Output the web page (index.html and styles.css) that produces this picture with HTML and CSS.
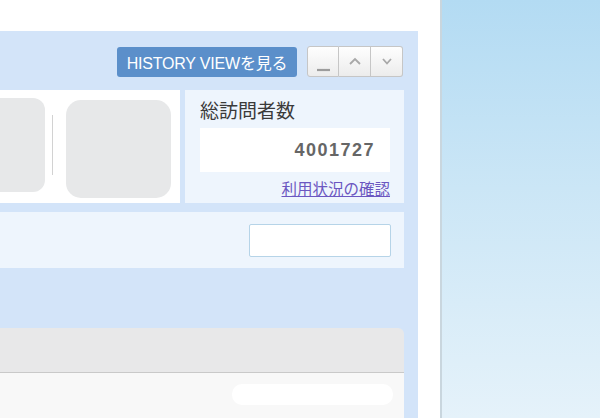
FILE: index.html
```html
<!DOCTYPE html>
<html lang="ja">
<head>
<meta charset="UTF-8" />
<meta name="viewport" content="width=device-width, initial-scale=1" />
<title>総訪問者数</title>
<link rel="stylesheet" href="styles.css">
</head>
<body>
  <div class="page">
    <div class="page-top"></div>
    <div class="panel">
      <div class="toolbar">
        <a class="history-btn" href="#">HISTORY VIEWを見る</a>
        <div class="btn-group">
          <button class="seg" aria-label="最小化">
            <svg viewBox="0 0 16 16" aria-hidden="true"><line x1="2" y1="13" x2="15" y2="13" class="bar"/></svg>
          </button>
          <button class="seg" aria-label="上へ">
            <svg viewBox="0 0 16 16" aria-hidden="true"><polyline points="3,10 8,5 13,10"/></svg>
          </button>
          <button class="seg" aria-label="下へ">
            <svg viewBox="0 0 16 16" aria-hidden="true"><polyline points="4,5 8,9.5 12,5"/></svg>
          </button>
        </div>
      </div>

      <div class="row-top">
        <div class="gallery">
          <div class="tile tile-a"></div>
          <div class="tile-edge"></div>
          <div class="tile tile-b"></div>
        </div>
        <div class="stat">
          <div class="stat-title">総訪問者数</div>
          <div class="counter">4001727</div>
          <div class="stat-link"><a href="#">利用状況の確認</a></div>
        </div>
      </div>

      <div class="row-search">
        <input class="search" type="text" aria-label="検索" />
      </div>

      <div class="card">
        <div class="card-head"></div>
        <div class="card-body">
          <div class="pill"></div>
        </div>
      </div>
    </div>
  </div>
  <div class="side"></div>
</body>
</html>
```

FILE: styles.css
```css
html, body {
  height: 100%;
  margin: 0;
}
body {
  display: flex;
  background: #fff;
  font-family: 'Liberation Sans', 'Noto Sans CJK JP', sans-serif;
  overflow: hidden;
}
.page {
  width: 440px;
  flex: none;
  display: flex;
  flex-direction: column;
  border-right: 2px solid #c9d6de;
}
.page-top {
  height: 31px;
  flex: none;
}
.panel {
  width: 404px;
  flex: 1;
  background: #d3e4f9;
  padding-right: 14px;
  display: flex;
  flex-direction: column;
}
.side {
  flex: 1;
  background: linear-gradient(to bottom, #b3dbf3 0%, #cbe6f6 45%, #e5f2fa 100%);
}

/* toolbar */
.toolbar {
  display: flex;
  justify-content: flex-end;
  align-items: center;
  gap: 10px;
  padding-top: 15px;
  height: 31px;
}
.history-btn {
  display: flex;
  align-items: center;
  justify-content: center;
  width: 180px;
  height: 30px;
  background: #5b8fca;
  color: #fff;
  font-size: 16px;
  letter-spacing: -0.2px;
  text-decoration: none;
  border-radius: 3px;
  box-sizing: border-box;
  white-space: nowrap;
}
.btn-group {
  display: flex;
  margin-right: 1px;
}
.seg {
  width: 32px;
  height: 31px;
  padding: 0;
  margin: 0;
  border: 1px solid #c6c6c6;
  border-left: none;
  background: linear-gradient(to bottom, #fefefe, #ececec);
  display: flex;
  align-items: center;
  justify-content: center;
  cursor: pointer;
}
.seg:first-child {
  border-left: 1px solid #c6c6c6;
  border-radius: 3px 0 0 3px;
}
.seg:last-child {
  border-radius: 0 3px 3px 0;
}
.seg svg {
  width: 16px;
  height: 16px;
  fill: none;
  stroke: #a8a8a8;
  stroke-width: 1.8;
}
.seg svg .bar {
  stroke: #9c9c9c;
  stroke-width: 2.2;
}
.seg:first-child svg {
  margin-top: 6px;
}

/* gallery + stat */
.row-top {
  display: flex;
  gap: 5px;
  margin-top: 13px;
  height: 113px;
}
.gallery {
  width: 180px;
  flex: none;
  background: #fff;
  display: flex;
  justify-content: flex-end;
  align-items: flex-start;
  overflow: hidden;
  padding-right: 9px;
  box-sizing: border-box;
}
.tile {
  flex: none;
  background: #e7e8e9;
  border-radius: 15px;
}
.tile-a {
  width: 105px;
  height: 94px;
  margin-top: 8px;
  border-radius: 0 12px 12px 0;
}
.tile-edge {
  flex: none;
  width: 1px;
  height: 60px;
  margin: 25px 13px 0 7px;
  background: #d2d2d2;
}
.tile-b {
  width: 105px;
  height: 98px;
  margin-top: 10px;
}
.stat {
  flex: 1;
  background: #eef5fd;
  padding: 7px 14px 0 15px;
}
.stat-title {
  font-family: 'Noto Sans CJK JP', sans-serif;
  font-size: 19px;
  line-height: 25px;
  color: #3a3a3a;
}
.counter {
  margin-top: 6px;
  height: 44px;
  line-height: 44px;
  background: #fff;
  text-align: right;
  padding-right: 15px;
  font-family: 'Liberation Sans', sans-serif;
  font-weight: 700;
  font-size: 18px;
  letter-spacing: 1.5px;
  color: #666;
}
.stat-link {
  margin-top: 6px;
  text-align: right;
  font-family: 'Noto Sans CJK JP', sans-serif;
  font-size: 15.5px;
  line-height: 20px;
}
.stat-link a {
  color: #6b57c1;
  text-decoration: underline;
}

/* search row */
.row-search {
  margin-top: 9px;
  height: 56px;
  background: #eef5fd;
  display: flex;
  align-items: center;
  justify-content: flex-end;
  padding-right: 13px;
}
.search {
  width: 142px;
  height: 33px;
  box-sizing: border-box;
  border: 1px solid #b6d4e8;
  border-radius: 2px;
  background: #fff;
  margin-top: 1px;
}

/* card */
.card {
  margin-top: 60px;
  flex: 1;
  display: flex;
  flex-direction: column;
  border-top-right-radius: 6px;
  overflow: hidden;
}
.card-head {
  height: 44px;
  background: #e8e8e9;
  border-bottom: 1px solid #c9c9c9;
}
.card-body {
  flex: 1;
  background: #f8f8f8;
  display: flex;
  justify-content: flex-end;
  align-items: flex-start;
  padding: 11px 11px 0 0;
}
.pill {
  width: 161px;
  height: 21px;
  border-radius: 10px;
  background: #fff;
}
```
